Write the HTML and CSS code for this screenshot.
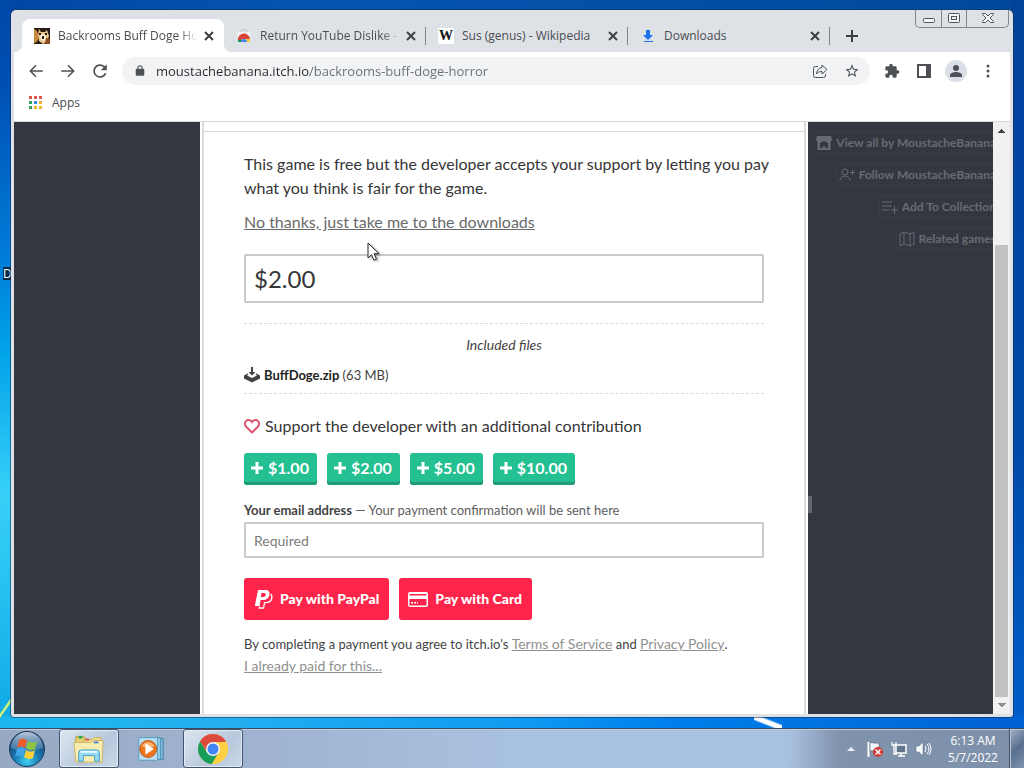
FILE: index.html
```html
<!doctype html>
<html lang="en">

<head>
  <meta charset="UTF-8">
  <meta name="viewport" content="width=device-width, initial-scale=1.0">
  <title>Backrooms Buff Doge Horror</title>
  <link rel="stylesheet" href="styles.css">
</head>

<body>
  <div class="desktop">
    <span class="desktop-label">D</span>

    <div class="window">
      <div class="tab-strip">
        <div class="tab active">
          <svg class="favicon" viewBox="0 0 16 16"><rect width="16" height="16" fill="#2a1a12"/><path d="M0 1l3 2 2 6-2 5-3 1z" fill="#c98a3c"/><path d="M5 1l2 3h4l2-2 2 6-2 6-4 2-4-3-1-6z" fill="#e7c48c"/><path d="M6 8l2-2 3 1 1 3-2 3-3-1z" fill="#fff3dc"/><path d="M8 8h2v3H8zM5 5h2v2H5zM11 5h2v2h-2z" fill="#2a1510"/><path d="M12 10l4 1v5h-5z" fill="#8c4a22"/></svg>
          <span class="tab-title fade">Backrooms Buff Doge Hor</span>
          <button class="tab-close" aria-label="Close tab"><svg viewBox="0 0 16 16"><path d="M4 4l8 8M12 4l-8 8"/></svg></button>
        </div>
        <div class="tab">
          <svg class="favicon" viewBox="0 0 16 16"><path d="M5 4V2h6v2" fill="none" stroke="#c3c7cc"/><path d="M1 4h14l-1 10H2z" fill="#eef0f2"/><path d="M2 13a6 6 0 0 1 12 0h-3a3 3 0 0 0-6 0z" fill="#db4437"/><path d="M2 14a6 6 0 0 1 1-5l3 3-1 2z" fill="#0f9d58"/><path d="M14 14a6 6 0 0 0-1-5l-3 3 1 2z" fill="#ffcd40"/><path d="M2 12a6 6 0 0 1 12-1H8z" fill="#db4437"/><path d="M5 14a3 3 0 0 1 6 0z" fill="#4285f4"/></svg>
          <span class="tab-title fade">Return YouTube Dislike - C</span>
          <button class="tab-close" aria-label="Close tab"><svg viewBox="0 0 16 16"><path d="M4 4l8 8M12 4l-8 8"/></svg></button>
        </div>
        <div class="tab">
          <span class="favicon wiki">W</span>
          <span class="tab-title">Sus (genus) - Wikipedia</span>
          <button class="tab-close" aria-label="Close tab"><svg viewBox="0 0 16 16"><path d="M4 4l8 8M12 4l-8 8"/></svg></button>
        </div>
        <div class="tab">
          <svg class="favicon" viewBox="0 0 16 16"><path d="M6 2h4v5h3l-5 5-5-5h3zM4 13h9v1H4z" fill="#1a73e8"/></svg>
          <span class="tab-title">Downloads</span>
          <button class="tab-close" aria-label="Close tab"><svg viewBox="0 0 16 16"><path d="M4 4l8 8M12 4l-8 8"/></svg></button>
        </div>
        <button class="new-tab" aria-label="New tab"><svg viewBox="0 0 16 16"><path d="M8 2v12M2 8h12"/></svg></button>
      </div>

      <div class="window-buttons">
        <button aria-label="Minimize"><svg viewBox="0 0 16 16"><rect x="2.500" y="8.500" width="11" height="4" rx="1"/></svg></button>
        <button aria-label="Maximize"><svg viewBox="0 0 16 16"><rect x="2.500" y="3.500" width="11" height="9" rx="1"/><rect x="5.500" y="6.500" width="5" height="3"/></svg></button>
        <button class="close" aria-label="Close"><svg viewBox="0 0 16 16"><path d="M2.500 3.500h3L8 6l2.500-2.500h3v1L10 8l3.500 3.500v1h-3L8 10l-2.500 2.500h-3v-1L6 8 2.500 4.500z"/></svg></button>
      </div>

      <div class="toolbar">
        <button class="tool" aria-label="Back"><svg viewBox="0 0 24 24"><path d="M21 11H6.800l6-6L11.400 3.600 3 12l8.400 8.400 1.400-1.400-6-6H21z"/></svg></button>
        <button class="tool" aria-label="Forward"><svg viewBox="0 0 24 24"><path d="M3 11h14.200l-6-6 1.400-1.400L21 12l-8.400 8.400-1.400-1.400 6-6H3z"/></svg></button>
        <button class="tool" aria-label="Reload"><svg viewBox="0 0 24 24"><path d="M18.400 5.600A9 9 0 1 0 20.700 14.500h-2.300A6.800 6.800 0 1 1 16.800 7.200L13 11h8V3z"/></svg></button>
        <div class="address-bar">
          <svg class="lock" viewBox="0 0 24 24"><path d="M18 8h-1V6A5 5 0 0 0 7 6v2H6a2 2 0 0 0-2 2v9a2 2 0 0 0 2 2h12a2 2 0 0 0 2-2v-9a2 2 0 0 0-2-2zM9 6a3 3 0 0 1 6 0v2H9z"/></svg>
          <input class="url" type="text" aria-label="Address" value="moustachebanana.itch.io/backrooms-buff-doge-horror">
          <button class="tool" aria-label="Share"><svg viewBox="0 0 16 16"><path class="line" d="M6 3.500H3.500a2 2 0 0 0-2 2v7a2 2 0 0 0 2 2h8a2 2 0 0 0 2-2V11M10 2l5 4.500-5 4.500V8.500c-3 0-4.500 1-5.500 2.500C4.800 7.500 6.500 5 10 4.500z"/></svg></button>
          <button class="tool" aria-label="Bookmark"><svg viewBox="0 0 24 24"><path d="M22 9.200l-7.200-.6L12 2 9.200 8.600 2 9.200l5.500 4.800L5.800 21 12 17.300l6.200 3.700-1.600-7zM12 15.400l-3.800 2.300 1-4.300-3.300-2.900 4.400-.4L12 6.100l1.700 4 4.400.4-3.300 2.900 1 4.300z"/></svg></button>
        </div>
        <div class="toolbar-end">
          <button class="tool" aria-label="Extensions"><svg viewBox="0 0 24 24"><path d="M20.500 11H19V7a2 2 0 0 0-2-2h-4V3.500a2.500 2.500 0 0 0-5 0V5H4a2 2 0 0 0-2 2v3.800h1.500a2.700 2.700 0 0 1 0 5.400H2V20a2 2 0 0 0 2 2h3.800v-1.500a2.700 2.700 0 0 1 5.400 0V22H17a2 2 0 0 0 2-2v-4h1.500a2.500 2.500 0 0 0 0-5z"/></svg></button>
          <button class="tool" aria-label="Side panel"><svg viewBox="0 0 16 16"><path d="M1 1h14v14H1zM3 3v10h7V3z" fill-rule="evenodd"/></svg></button>
          <button class="tool" aria-label="Profile"><span class="avatar"><svg viewBox="0 0 16 16"><circle cx="8" cy="5" r="3"/><path d="M2 14v-2c0-2 4-3 6-3s6 1 6 3v2z"/></svg></span></button>
          <button class="tool" aria-label="Menu"><svg viewBox="0 0 16 16"><circle cx="8" cy="3" r="1.500"/><circle cx="8" cy="8" r="1.500"/><circle cx="8" cy="13" r="1.500"/></svg></button>
        </div>
      </div>

      <div class="bookmarks">
        <a href="#" class="bookmark">
          <svg viewBox="0 0 14 14"><path d="M0 0h3v3H0zM5 0h3v3H5zM10 0h3v3h-3z" fill="#e0554b"/><path d="M0 5h3v3H0zM0 10h3v3H0z" fill="#2fa35b"/><path d="M5 5h3v3H5z" fill="#3b82ee"/><path d="M10 5h3v3h-3zM5 10h3v3H5zM10 10h3v3h-3z" fill="#eeb52c"/></svg>
          Apps
        </a>
      </div>

      <div class="page">
        <div class="page-body">
          <main class="column">
            <div class="top-rule"></div>
            <form class="purchase">
              <p class="intro">This game is free but the developer accepts your support by letting you pay<br>what you think is fair for the game.</p>
              <p class="skip"><a href="#">No thanks, just take me to the downloads</a></p>
              <input class="price" type="text" aria-label="Price" value="$2.00">

              <section class="files">
                <h2>Included files</h2>
                <div class="file">
                  <svg viewBox="0 0 16 16"><path d="M7 0h2v5h2.500L8 8.500 4.500 5H7z"/><path d="M3.500 6.500L0 8.500v3L8 15.500l8-4v-3l-3.500-2-1 1 1.500 1L8 11 3 8.500l1.500-1z"/></svg>
                  <span><strong>BuffDoge.zip</strong> (63 MB)</span>
                </div>
              </section>

              <p class="support">
                <svg viewBox="0 0 16 16"><path d="M8 14.500L2 8.500a3.800 3.800 0 0 1 0-5.400c1.500-1.500 4.200-1.500 6 .9 1.800-2.400 4.500-2.400 6-.9a3.800 3.800 0 0 1 0 5.400z"/></svg>
                Support the developer with an additional contribution
              </p>
              <div class="tips">
                <button type="button"><svg viewBox="0 0 12 12"><path d="M6 0v12M0 6h12"/></svg>$1.00</button>
                <button type="button"><svg viewBox="0 0 12 12"><path d="M6 0v12M0 6h12"/></svg>$2.00</button>
                <button type="button"><svg viewBox="0 0 12 12"><path d="M6 0v12M0 6h12"/></svg>$5.00</button>
                <button type="button"><svg viewBox="0 0 12 12"><path d="M6 0v12M0 6h12"/></svg>$10.00</button>
              </div>

              <label class="email-label" for="email"><strong>Your email address</strong> — Your payment confirmation will be sent here</label>
              <input class="email" id="email" type="email" placeholder="Required">

              <div class="pay">
                <button type="button">
                  <svg viewBox="0 0 20 20"><path d="M5 1h7c4 0 5 2 4.400 5-.7 3.600-3 5-6.400 5H7.600l-1 6H1.800z" fill="#fff"/><path d="M17.500 5c1.600 1.200 1.700 3 1.100 5-.8 2.600-2.800 3.600-5.600 3.600h-1.500l-.9 5.400H6.200l.3-1.300" fill="none" stroke="#fff" stroke-width="1.300"/><path d="M8.500 4H11c1.500 0 2 .7 1.700 2-.3 1.600-1.300 2-2.700 2H7.800z" fill="#ff2449"/></svg>
                  Pay with PayPal
                </button>
                <button type="button">
                  <svg viewBox="0 0 20 20"><path fill-rule="evenodd" d="M2 3h16q2 0 2 2v11q0 2-2 2H2q-2 0-2-2V5q0-2 2-2zM1.500 5v1.500h17V5zM1.500 10v6.500h17V10z" fill="#fff"/><path d="M3 13h2v1.500H3zM6 13h2v1.500H6zM9 13h1v1.500H9z" fill="#fff"/></svg>
                  Pay with Card
                </button>
              </div>

              <p class="terms">By completing a payment you agree to itch.io's <a href="#">Terms of Service</a> and <a href="#">Privacy Policy</a>.<br><a href="#">I already paid for this...</a></p>
            </form>
          </main>

          <nav class="user-tools">
            <a href="#"><svg viewBox="0 0 16 16"><path fill-rule="evenodd" d="M1 1h14l1 4-1.500 2v8h-13V7L0 5zM4 8v5h1.500l2.500-2 2.500 2H12V8L8 6z"/></svg>View all by MoustacheBanana</a>
            <a href="#"><svg class="stroke" viewBox="0 0 16 16"><circle cx="6" cy="5" r="3"/><path d="M1 14c0-3 2-5 5-5s5 2 5 5M13.500 3v5M11 5.500h5"/></svg>Follow MoustacheBanana</a>
            <a href="#"><svg class="stroke" viewBox="0 0 16 16"><path d="M0 3h10M0 7h10M0 11h7M12.500 7v8M9 11h7"/></svg>Add To Collection</a>
            <a href="#"><svg class="stroke" viewBox="0 0 16 16"><path d="M1 3l4-2 6 2 4-2v12l-4 2-6-2-4 2zM5 1v12M11 3v12"/></svg>Related games</a>
          </nav>
          <span class="resize-mark"></span>
        </div>
        <div class="scrollbar">
          <span class="arrow up"></span>
          <span class="track"><span class="thumb"></span></span>
          <span class="arrow down"></span>
        </div>
      </div>
    </div>

    <svg class="cursor" viewBox="0 0 14 20"><path d="M1 1v15l3.500-3.300 2.400 5.600 2.600-1.100-2.400-5.500H12z"/></svg>
  </div>

  <footer class="taskbar">
    <button class="start" aria-label="Start">
      <svg viewBox="0 0 36 36">
        <defs>
          <radialGradient id="orb" cx="50%" cy="85%" r="80%"><stop offset="0" stop-color="#3fd0f4"/><stop offset=".45" stop-color="#1878b0"/><stop offset="1" stop-color="#1d3f6c"/></radialGradient>
          <linearGradient id="shine" x2="0" y2="1"><stop offset="0" stop-color="#e4eef8" stop-opacity=".8"/><stop offset="1" stop-color="#7fa7cc" stop-opacity=".3"/></linearGradient>
        </defs>
        <circle cx="18" cy="18" r="17.500" fill="url(#orb)" stroke="#1b3c5e"/>
        <path d="M2 17a16 16 0 0 1 32 0c-10 4-22 4-32 0z" fill="url(#shine)"/>
        <path d="M10 9c3-2 5-1 8 0l-2 8c-3-2-5-2-8 0z" fill="#ee5a2a"/>
        <path d="M19 10c3 2 6 2 9 0l-2 8c-3 2-6 1-9-1z" fill="#8cc63e"/>
        <path d="M8 18c3-2 5-2 8 0l-2 8c-3-2-5-2-8 0z" fill="#42a5e8"/>
        <path d="M17 19c3 2 6 2 9 0l-2 8c-3 2-6 1-9-1z" fill="#fbd03b"/>
      </svg>
    </button>
    <button class="task open" aria-label="Windows Explorer">
      <svg viewBox="0 0 34 32"><path d="M3 3h9l2 3h14v22H3z" fill="#e8cf73" stroke="#b99b45"/><path d="M6 2h4v3H6z" fill="#35a852"/><path d="M12 6h8l2-2h8v24H8z" fill="#f3e197" stroke="#c5aa55"/><path d="M13 5h4v2h-4z" fill="#de5140"/><path d="M1 9h18l2-2h11l-1 23H3z" fill="#f8edaf" stroke="#cab266"/><path d="M22 8h5v2h-5z" fill="#4b81cf"/><path d="M6 29v-9q0-3 3-3h16q3 0 3 3v9h-5v-6H11v6z" fill="#94d9f5" stroke="#3b9cc9"/><path d="M8 19h18" stroke="#e9fbff" stroke-width="2"/></svg>
    </button>
    <button class="task" aria-label="Windows Media Player">
      <svg viewBox="0 0 34 32"><path d="M8 5h22v22H8z" fill="#7ebadb" stroke="#437f9f"/><path d="M6 4h21v23H6z" fill="#99cee8" stroke="#4c91b6"/><path d="M4 4h20v24H4z" fill="#bbdef1" stroke="#559dc0"/><circle cx="14" cy="16" r="9" fill="#ed751c" stroke="#bf5717"/><path d="M7 13a8 8 0 0 1 14 0c-5 2-9 2-14 0z" fill="#ffb574"/><path d="M11 10l9 6-9 6z" fill="#fff"/></svg>
    </button>
    <button class="task open" aria-label="Google Chrome">
      <svg viewBox="0 0 32 32"><circle cx="16" cy="16" r="15" fill="#ffcf44"/><path d="M16 16L3 8.500a15 15 0 0 1 26 0z" fill="#dd4b3e"/><path d="M16 9h13a15 15 0 0 0-26-.5L10 19z" fill="#dd4b3e"/><path d="M3 8.500a15 15 0 0 0 12 22.500l6.500-11.500L10 19.500z" fill="#189d5b"/><path d="M22 19.500L15 31a15 15 0 0 0 14-22H16z" fill="#ffcf44"/><circle cx="16" cy="16" r="7" fill="#f4f6f8"/><circle cx="16" cy="16" r="5.500" fill="#4385f4"/></svg>
    </button>

    <div class="tray">
      <svg viewBox="0 0 16 16"><path d="M4 10l4-4 4 4z" fill="#eef3f9"/></svg>
      <svg viewBox="0 0 16 16"><path d="M1.500 1v15" stroke="#fff" stroke-width="2"/><path d="M3 2c3-1 4 1 9 0v8c-4 1-6-1-9 0z" fill="#f4f6f9" stroke="#485569" stroke-width=".5"/><circle cx="11" cy="11" r="5" fill="#d43a32"/><path d="M8.500 8.500l5 5M13.500 8.500l-5 5" stroke="#fff" stroke-width="1.500"/></svg>
      <svg viewBox="0 0 16 16"><path d="M5 4h10v8H5zM7 15h7M10 12v3" fill="#63758d" stroke="#fff" stroke-width="1.500"/><path d="M1 1v3h4V1M3 4v9h3" fill="none" stroke="#fff" stroke-width="1.300"/></svg>
      <svg viewBox="0 0 16 16"><path d="M1 5h3l4-4v14l-4-4H1z" fill="#f7f9fb" stroke="#506078" stroke-width=".5"/><path d="M10 5q2 3 0 6M12 3q4 5 0 10M14 2q4 6 0 12" fill="none" stroke="#fff"/></svg>
    </div>
    <div class="clock"><span>6:13 AM</span><span>5/7/2022</span></div>
    <button class="show-desktop" aria-label="Show desktop"></button>
  </footer>
</body>

</html>
```
FILE: styles.css
```css
:root {
  --ui-font: "Open Sans", "Noto Sans", sans-serif;
  --page-font: Lato, "Liberation Sans", sans-serif;
  --frame: #dee1e6;
  --icon: #4d5156;
  --page-dark: #353740;
  --itch-red: #ff2449;
  --itch-green: #24c091;
}

* {
  margin: 0;
  padding: 0;
  box-sizing: border-box;
}

body {
  display: flex;
  flex-direction: column;
  height: 100vh;
  overflow: hidden;
  font-family: var(--ui-font);
  font-size: 12px;
  color: #4a4e52;
}

button {
  border: 0;
  background: none;
  font: inherit;
  color: inherit;
}

svg {
  display: block;
  flex: none;
  overflow: visible;
}

/* Desktop */
.desktop {
  position: relative;
  flex: 1;
  min-height: 0;
  display: flex;
  padding: 10px 11px 11px;
  background:
    linear-gradient(to top right, transparent 32%, #fff 42%, #fff 58%, transparent 68%) 754px 100% / 28px 11px no-repeat,
    linear-gradient(125deg, transparent 45%, #c5f07c 47%, #c5f07c 53%, transparent 55%) 0 100% / 11px 40px no-repeat,
    linear-gradient(90deg, #1cb6ee, #24b0f0 20%, #0f9cf2 50%, #0080ec 65%, #0060d4) 0 100% / 100% 12px no-repeat,
    linear-gradient(#004599, #0042a0 15%, #004aa8 60%, #005cc8) 100% 0 / 14px 100% no-repeat,
    linear-gradient(#0048a6, #0050b4 12%, #007cd8 35%, #00a2e8 48%, #38d0f8 68%, #10a8e4) 0 0 / 14px 100% no-repeat,
    linear-gradient(90deg, #0346a4, #0454b0 30%, #0450a8 60%, #00489c);
}

.desktop-label {
  position: absolute;
  top: 267px;
  left: 3px;
  line-height: 13px;
  color: #fff;
  background: #062c4a;
}

/* Browser window */
.window {
  position: relative;
  flex: 1;
  min-width: 0;
  display: flex;
  flex-direction: column;
  padding: 0 3px 3px;
  background: var(--frame);
  border-radius: 5px 5px 3px 3px;
  box-shadow: 0 0 0 1px rgba(20, 50, 90, 0.6);
}

.tab-strip {
  display: flex;
  align-items: stretch;
  height: 42px;
  padding: 9px 120px 0 8px;
}

.tab {
  position: relative;
  flex: 0 1 202px;
  min-width: 0;
  display: flex;
  align-items: center;
  gap: 8px;
  padding: 0 7px 0 12px;
}

.tab:not(.active)::after {
  content: "";
  position: absolute;
  right: 0;
  top: 8px;
  width: 1px;
  height: 18px;
  background: #80868b;
}

.tab.active {
  background: #fff;
  border-radius: 8px 8px 0 0;
}

.tab.active::before,
.tab.active::after {
  content: "";
  position: absolute;
  bottom: 0;
  width: 8px;
  height: 8px;
}

.tab.active::before {
  left: -8px;
  background: radial-gradient(circle at 0 0, transparent 8px, #fff 8px);
}

.tab.active::after {
  right: -8px;
  background: radial-gradient(circle at 100% 0, transparent 8px, #fff 8px);
}

.favicon {
  flex: none;
  width: 16px;
  height: 16px;
}

.wiki {
  font: bold 14px/16px "Liberation Serif", serif;
  text-align: center;
  color: #111;
  background: #fff;
  border-radius: 2px;
}

.tab-title {
  flex: 1;
  white-space: nowrap;
  overflow: hidden;
}

.fade {
  margin-right: -4px;
  mask-image: linear-gradient(90deg, #000 88%, transparent);
}

.tab-close svg {
  width: 16px;
  height: 16px;
}

.tab-close path,
.new-tab path {
  stroke: #3c4043;
  stroke-width: 2;
}

.new-tab {
  padding: 0 14px;
}

.new-tab svg {
  width: 16px;
  height: 16px;
}

.window-buttons {
  position: absolute;
  top: 0;
  right: 4px;
  display: flex;
  height: 18px;
  border: 1px solid #83888f;
  border-top: 0;
  border-radius: 0 0 5px 5px;
}

.window-buttons button {
  display: flex;
  justify-content: center;
  width: 25px;
}

.window-buttons button + button {
  border-left: 1px solid #83888f;
}

.window-buttons .close {
  width: 42px;
}

.window-buttons svg {
  width: 16px;
  height: 16px;
  fill: #f4f5f7;
  stroke: #50555c;
}

.toolbar {
  display: flex;
  align-items: center;
  gap: 6px;
  height: 38px;
  padding: 0 6px;
  background: #fff;
}

.tool {
  display: flex;
  align-items: center;
  justify-content: center;
  width: 32px;
  height: 28px;
}

.toolbar > .tool + .tool {
  margin-left: -6px;
}

.tool svg {
  width: 16px;
  height: 16px;
  fill: var(--icon);
}

.toolbar > .tool svg {
  width: 18px;
  height: 18px;
}

.tool .line {
  fill: none;
  stroke: var(--icon);
}

.address-bar {
  flex: 1;
  display: flex;
  align-items: center;
  height: 28px;
  padding: 0 2px 0 10px;
  background: #f1f3f4;
  border-radius: 14px;
}

.lock {
  width: 16px;
  height: 16px;
  margin-right: 8px;
  fill: var(--icon);
}

.lock path {
  transform: scale(0.8);
  transform-origin: center;
}

.url {
  flex: 1;
  min-width: 0;
  border: 0;
  outline: 0;
  font: 13px/20px var(--ui-font);
  color: transparent;
  background: linear-gradient(90deg, #27292c 154px, #6a6e73 154px);
  background-clip: text;
}

.toolbar-end {
  display: flex;
}

.avatar {
  display: flex;
  align-items: center;
  justify-content: center;
  width: 22px;
  height: 22px;
  border-radius: 50%;
  background: #dadfe8;
}

.bookmarks {
  display: flex;
  align-items: center;
  height: 32px;
  padding: 0 15px 6px;
  background: #fff;
  border-bottom: 1px solid #d5d8da;
}

.bookmark {
  display: flex;
  align-items: center;
  gap: 9px;
  color: inherit;
  text-decoration: none;
}

.bookmark svg {
  width: 14px;
  height: 14px;
}

/* Page content */
.page {
  flex: 1;
  min-height: 0;
  display: flex;
  background: var(--page-dark);
  font-family: var(--page-font);
}

.page-body {
  position: relative;
  flex: 1;
  min-width: 0;
  display: grid;
  grid-template-columns: minmax(0, 1fr) 608px minmax(0, 1fr);
  padding-left: 1px;
  overflow: hidden;
}

.column {
  grid-column: 2;
  display: flex;
  flex-direction: column;
  padding: 0 2px;
  background: #fff;
}

.top-rule {
  height: 10px;
  border: solid #d9dcdd;
  border-width: 0 2px 1px;
}

.purchase {
  flex: 1;
  padding: 20px 40px 0;
  border: solid #d9dcdd;
  border-width: 0 2px;
  font-size: 13px;
  line-height: 22px;
  color: #434343;
}

.intro,
.skip {
  font-size: 16px;
  line-height: 24px;
  color: #363636;
}

.intro {
  white-space: nowrap;
}

.skip {
  margin: 10px 0 20px;
}

.skip a {
  color: #6a6a6a;
}

.price,
.email {
  display: block;
  width: 100%;
  border: 2px solid #cacaca;
  background: #fff;
  font-family: inherit;
  color: #363636;
}

.price {
  height: 49px;
  padding: 0 8px;
  border-radius: 2px;
  font-size: 24px;
}

.files {
  margin: 20px 0;
  padding: 10px 0 7px;
  border: dashed #dadada;
  border-width: 1px 0;
}

.files h2 {
  font-size: 14px;
  font-weight: normal;
  font-style: italic;
  text-align: center;
}

.file {
  display: flex;
  align-items: center;
  gap: 4px;
  margin-top: 8px;
}

.file strong {
  color: #222;
}

.file svg {
  width: 16px;
  height: 16px;
  fill: #434343;
}

.support {
  display: flex;
  align-items: center;
  gap: 5px;
  margin-bottom: 15px;
  font-size: 16px;
  line-height: 24px;
  color: #363636;
}

.support svg {
  width: 16px;
  height: 16px;
  fill: none;
  stroke: #da5570;
  stroke-width: 2;
}

.tips,
.pay {
  display: flex;
  gap: 10px;
}

.tips button {
  display: flex;
  align-items: center;
  gap: 5px;
  height: 32px;
  padding: 0 8px 3px 7px;
  border-radius: 3px;
  background: var(--itch-green);
  box-shadow: inset 0 -3px #1f9c77;
  font-size: 16px;
  font-weight: bold;
  color: #fff;
}

.tips svg {
  width: 12px;
  height: 12px;
  stroke: #fff;
  stroke-width: 3;
}

.email-label {
  display: block;
  margin-top: 14px;
  line-height: 23px;
  color: #606060;
}

.email-label strong {
  color: #434343;
}

.email {
  height: 36px;
  padding: 0 8px;
  font-size: 14px;
}

.email::placeholder {
  color: #7c7c7c;
}

.pay {
  margin: 20px 0 13px;
}

.pay button {
  display: flex;
  align-items: center;
  gap: 7px;
  height: 42px;
  padding: 0 10px 0 9px;
  border-radius: 3px;
  background: var(--itch-red);
  font-size: 14px;
  font-weight: 900;
  color: #fff;
}

.pay svg {
  width: 20px;
  height: 20px;
}

.terms a {
  font-size: 14px;
  color: #909090;
}

.user-tools {
  display: flex;
  flex-direction: column;
  align-items: flex-end;
  gap: 10px;
  margin-right: -14px;
  padding-top: 10px;
}

.user-tools a {
  display: flex;
  align-items: center;
  gap: 4px;
  padding: 0 10px 0 2px;
  border: 1px solid #3b3d46;
  font-size: 12px;
  font-weight: bold;
  line-height: 20px;
  color: #686a72;
  text-decoration: none;
  white-space: nowrap;
}

.user-tools svg {
  width: 16px;
  height: 16px;
  fill: currentColor;
}

.user-tools .stroke {
  fill: none;
  stroke: currentColor;
}

.resize-mark {
  position: absolute;
  left: 794px;
  bottom: 201px;
  width: 4px;
  height: 17px;
  background: #65666c;
}

.scrollbar {
  display: flex;
  flex-direction: column;
  align-items: center;
  width: 17px;
  background: #f1f1f1;
}

.arrow {
  width: 8px;
  height: 17px;
}

.up {
  background: conic-gradient(from 135deg at 50% 0, #404040 90deg, transparent 0) 0 7px / 8px 4px no-repeat;
}

.down {
  background: conic-gradient(from 315deg at 50% 100%, #909090 90deg, transparent 0) 0 6px / 8px 4px no-repeat;
}

.track {
  flex: 1;
  display: flex;
  align-items: flex-end;
}

.thumb {
  width: 13px;
  height: 81%;
  background: #c1c1c1;
}

.cursor {
  position: absolute;
  top: 242px;
  left: 367px;
  width: 14px;
  height: 20px;
  fill: #fff;
  stroke: #222;
  filter: drop-shadow(2px 1px 1px rgba(0, 0, 0, 0.3));
}

/* Taskbar */
.taskbar {
  display: flex;
  align-items: stretch;
  height: 40px;
  padding-left: 9px;
  border-top: 1px solid #3a4c63;
  background: linear-gradient(90deg, #98a9c3, #9fb3d0 25%, #a9c1e0 50%, #a9c1e0 77%, #8093ad 82%, #7e90aa);
  box-shadow: inset 0 1px #bdcde0;
}

.start svg {
  width: 36px;
  height: 36px;
}

.task {
  display: flex;
  align-items: center;
  justify-content: center;
  width: 60px;
  margin-left: 2px;
  border: 1px solid transparent;
  border-radius: 3px;
}

.start + .task {
  margin-left: 14px;
}

.task.open {
  border-color: #43546c;
  background: linear-gradient(135deg, #dde6f1, #b8c8dc 60%, #c9d8e9);
  box-shadow: inset 0 0 0 1px #e3ebf5;
}

.task svg {
  width: 32px;
  height: 32px;
}

.tray {
  display: flex;
  align-items: center;
  gap: 8px;
  margin-left: auto;
}

.tray svg {
  width: 16px;
  height: 16px;
}

.clock {
  display: flex;
  flex-direction: column;
  justify-content: center;
  width: 78px;
  padding-left: 6px;
  line-height: 17px;
  text-align: center;
  color: #fff;
}

.show-desktop {
  width: 15px;
  border-left: 1px solid #42526a;
  background: linear-gradient(135deg, #a5b3c6, #58708f 50%, #7f93ad);
  box-shadow: inset 1px 1px #b9c6d6;
}
```
